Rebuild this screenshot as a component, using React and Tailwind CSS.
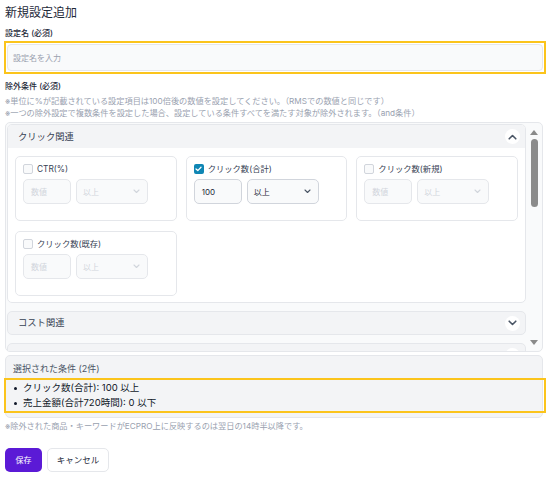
import React from "react";

function ChevronDownSmall({ className = "" }) {
  return (
    <svg width="7" height="5" viewBox="0 0 7 5" className={className}>
      <path d="M1 1 L3.5 3.5 L6 1" fill="none" stroke="currentColor" strokeWidth="1.1" strokeLinecap="round" strokeLinejoin="round" />
    </svg>
  );
}

function CircleChevron({ up }) {
  return (
    <div className="flex h-[15px] w-[15px] items-center justify-center rounded-full bg-white text-gray-600">
      <svg width="9" height="6" viewBox="0 0 9 6">
        <path
          d={up ? "M1.2 4.8 L4.5 1.5 L7.8 4.8" : "M1.2 1.2 L4.5 4.5 L7.8 1.2"}
          fill="none"
          stroke="currentColor"
          strokeWidth="1.6"
          strokeLinecap="round"
          strokeLinejoin="round"
        />
      </svg>
    </div>
  );
}

function Card({ label, checked = false, value = "" }) {
  return (
    <div className="h-[65px] rounded-[5px] border border-gray-200 bg-white pl-[7px] pt-[7px]">
      <div className="flex h-[10px] items-center gap-[4px]">
        {checked ? (
          <div className="flex h-[10px] w-[10px] items-center justify-center rounded-[2px] bg-[#0f86b4]">
            <svg width="7" height="6" viewBox="0 0 7 6">
              <path d="M1 3 L2.8 4.6 L6 1.3" fill="none" stroke="white" strokeWidth="1.3" strokeLinecap="round" strokeLinejoin="round" />
            </svg>
          </div>
        ) : (
          <div className="h-[10px] w-[10px] rounded-[2px] border border-gray-300 bg-gray-50" />
        )}
        <span className="text-[8.3px] leading-[10px] text-gray-700">{label}</span>
      </div>
      <div className="mt-[5px] flex gap-[5px]">
        <div
          className={
            "flex h-[25px] w-[48px] items-center rounded-[5px] border pl-[7px] text-[8px] " +
            (checked ? "border-gray-300 bg-gray-50 text-gray-800" : "border-gray-200 bg-gray-50 text-gray-300")
          }
        >
          {checked ? value : "数値"}
        </div>
        <div
          className={
            "flex h-[25px] w-[72px] items-center justify-between rounded-[5px] border pl-[6px] pr-[7px] text-[8px] " +
            (checked ? "border-gray-300 bg-gray-50 text-gray-800" : "border-gray-200 bg-gray-50 text-gray-300")
          }
        >
          <span>以上</span>
          <ChevronDownSmall className={checked ? "text-gray-600" : "text-gray-300"} />
        </div>
      </div>
    </div>
  );
}

export default function App() {
  return (
    <div className="h-[478px] w-[549px] overflow-hidden bg-white pl-[5px] font-[Inter,'Noto_Sans_CJK_JP',sans-serif] text-gray-800">
      <div className="h-[26px] text-[12px] leading-[25px] text-gray-800">新規設定追加</div>
      <div className="h-[15px] text-[8px] leading-[15px] font-medium text-gray-800">設定名 (必須)</div>
      <div className="-ml-[1px] w-[542px] border-2 border-[#fbc41c] p-[1px]">
        <div className="flex h-[27px] items-center rounded-[4px] border border-gray-200 bg-gray-50 pl-[5px] text-[8px] text-gray-400">
          設定名を入力
        </div>
      </div>
      <div className="mt-[4px] h-[16px] text-[8px] leading-[16px] font-medium text-gray-800">除外条件 (必須)</div>
      <div className="mt-[1px] text-[8.2px] leading-[12px] text-gray-400">
        <div>※単位に%が記載されている設定項目は100倍後の数値を設定してください。（RMSでの数値と同じです）</div>
        <div>※一つの除外設定で複数条件を設定した場合、設定している条件すべてを満たす対象が除外されます。（and条件）</div>
      </div>

      <div className="mt-[3px] flex h-[230px] w-[538px] overflow-hidden rounded-[5px] border border-gray-200 bg-gray-50">
        <div className="flex flex-1 flex-col gap-[8px] overflow-hidden pl-[1px] pt-[1px]">
          <div className="shrink-0 overflow-hidden rounded-[5px] border border-gray-200 bg-white">
            <div className="flex h-[23px] items-center justify-between bg-gray-100 pl-[10px] pr-[5px]">
              <span className="text-[9.3px] text-gray-700">クリック関連</span>
              <CircleChevron up />
            </div>
            <div className="grid grid-cols-3 gap-x-[9px] gap-y-[10px] px-[7px] pb-[6px] pt-[8px]">
              <Card label="CTR(%)" />
              <Card label="クリック数(合計)" checked value="100" />
              <Card label="クリック数(新規)" />
              <Card label="クリック数(既存)" />
            </div>
          </div>
          <div className="flex h-[24px] shrink-0 items-center justify-between rounded-[5px] border border-gray-200 bg-gray-100 pl-[10px] pr-[5px]">
            <span className="text-[9.3px] text-gray-700">コスト関連</span>
            <CircleChevron />
          </div>
          <div className="flex h-[24px] shrink-0 items-center justify-end rounded-[5px] border border-gray-200 bg-gray-100 pr-[5px]">
            <CircleChevron />
          </div>
        </div>
        <div className="flex w-[16px] flex-col items-center pt-[7px] pb-[6px]">
          <svg width="8" height="5" viewBox="0 0 8 5">
            <path d="M4 0 L8 5 L0 5 Z" fill="#8a8a8a" />
          </svg>
          <div className="mt-[4px] h-[68px] w-[7px] rounded-full bg-[#8b8b8b]" />
          <div className="flex-1" />
          <svg width="8" height="5" viewBox="0 0 8 5">
            <path d="M0 0 L8 0 L4 5 Z" fill="#8a8a8a" />
          </svg>
        </div>
      </div>

      <div className="mt-[3px] w-[538px] rounded-[5px] border border-gray-200 bg-gray-100 px-[7px] pt-[7px] pb-[4px]">
        <div className="text-[9px] leading-[12px] text-gray-600">選択された条件 (2件)</div>
        <ul className="-ml-[9px] -mr-[11px] mt-[3px] border-2 border-[#fbc41c] pl-[8px] text-[9.5px] text-gray-900">
          <li className="flex h-[16px] items-center gap-[6px]">
            <span className="h-[3px] w-[3px] rounded-full bg-gray-900" />
            <span>クリック数(合計): 100 以上</span>
          </li>
          <li className="flex h-[15px] items-center gap-[6px]">
            <span className="h-[3px] w-[3px] rounded-full bg-gray-900" />
            <span>売上金額(合計720時間): 0 以下</span>
          </li>
        </ul>
      </div>

      <div className="mt-[2px] text-[8.2px] leading-[12px] text-gray-400">
        ※除外された商品・キーワードがECPRO上に反映するのは翌日の14時半以降です。
      </div>

      <div className="mt-[16px] flex gap-[5px]">
        <button className="flex h-[24px] w-[37px] items-center justify-center rounded-[5px] bg-[#5b1ad6] text-[8px] text-white">
          保存
        </button>
        <button className="flex h-[24px] w-[62px] items-center justify-center rounded-[5px] border border-gray-200 bg-white text-[8.5px] text-gray-800">
          キャンセル
        </button>
      </div>
    </div>
  );
}
